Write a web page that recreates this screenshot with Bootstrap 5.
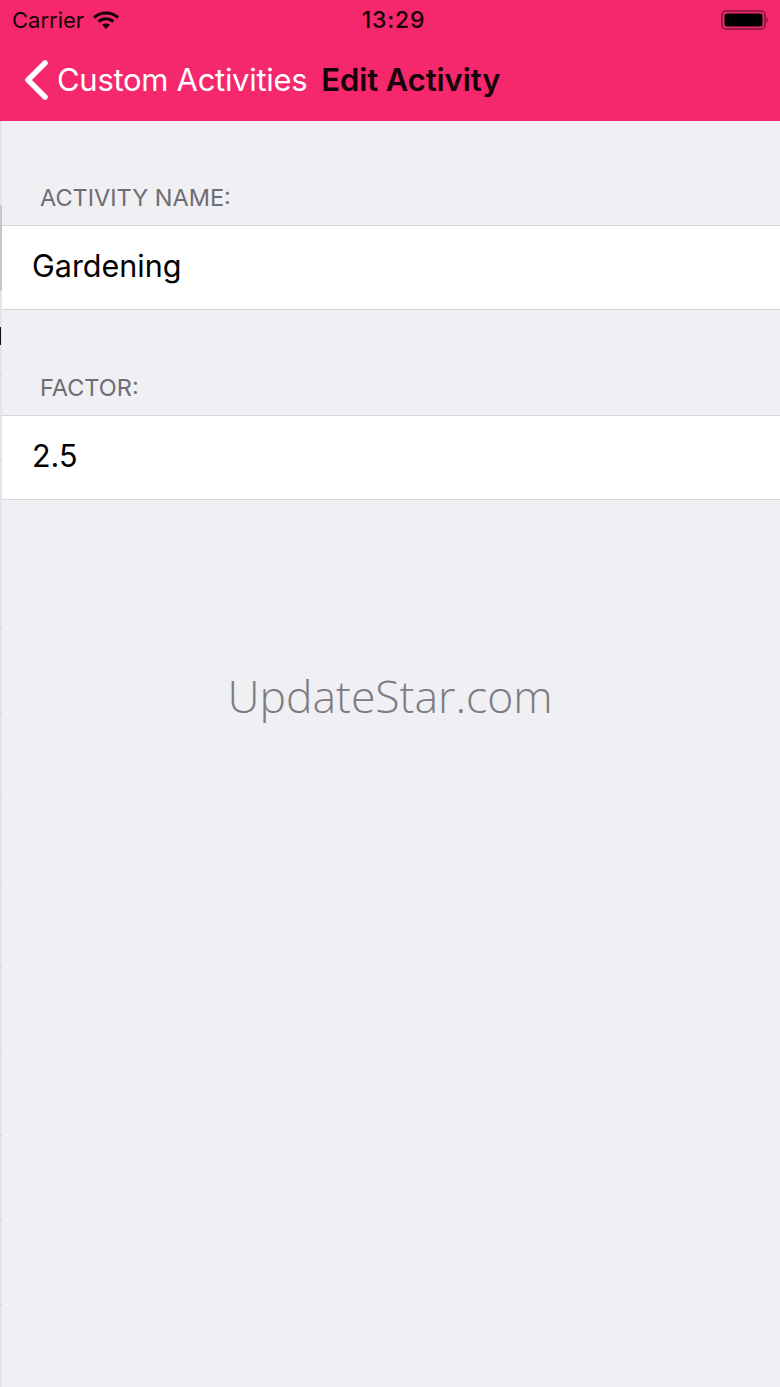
<!DOCTYPE html>
<html>
  <head>
    <meta name="viewport" content="width=device-width, initial-scale=1">
    <link rel="stylesheet" href="https://cdn.jsdelivr.net/npm/bootstrap@5.3.3/dist/css/bootstrap.min.css">
    <style>
      html, body {
        height: 100%;
      }

      body {
        background-color: #efeff4;
        font-family: Inter, "Liberation Sans", sans-serif;
        overflow: hidden;
      }

      .app-header {
        background-color: #f5276d;
        height: 121px;
      }

      .status-row {
        height: 40px;
        padding: 0 12px;
        font-size: 22px;
        color: #16020a;
      }

      .status-side {
        flex: 1 1 0;
      }

      .status-time {
        font-size: 23px;
        font-weight: 500;
        letter-spacing: .8px;
        margin-left: 7px;
      }

      .title-row {
        height: 80px;
        padding-left: 24px;
        font-size: 31px;
      }

      .back-text {
        color: #fff;
        margin-left: 8px;
        letter-spacing: -.3px;
      }

      .title-text {
        color: #16020a;
        font-weight: 600;
        margin-left: 14px;
        letter-spacing: -.1px;
      }

      .page-body {
        height: 1266px;
      }

      .peek-strip {
        width: 2px;
        background-color: #e4e4e9;
        background-image: linear-gradient(to bottom, transparent 83.5px, #cfcfd4 83.5px);
        background-size: 100% 84.5px;
        background-position: 0 1px;
      }

      .peek-block {
        height: 85px;
        margin-top: 84px;
        background-color: #c6c6ca;
      }

      .peek-glyph {
        width: 1px;
        height: 18px;
        margin-top: 37px;
        background-color: #111;
      }

      .section-label {
        height: 45px;
        padding: 0 0 9px 38px;
        margin-top: 59px;
        font-size: 23.5px;
        color: #6d6d72;
      }

      .section-label-next {
        margin-top: 60px;
      }

      .value-row {
        height: 85px;
        padding-left: 31px;
        background-color: #fff;
        border-top: 1px solid #d6d6da;
        border-bottom: 1px solid #d6d6da;
        font-size: 30.5px;
        color: #000;
      }

      .value-text {
        margin-left: -1px;
        margin-top: -3px;
      }

      .watermark {
        margin-top: 166px;
        font-family: "Open Sans", sans-serif;
        font-weight: 300;
        font-size: 44.5px;
        line-height: 60px;
        color: #7c7c81;
        margin-left: -2px;
      }
    </style>
  </head>
  <body>
    <header class="app-header">
      <div class="status-row d-flex align-items-center">
        <div class="status-side d-flex align-items-center gap-2">
          <span>Carrier</span>
          <svg width="28" height="20" viewBox="0 0 28 20" fill="none" stroke="#16020a" stroke-width="3.2">
            <path d="M2 7.5c7-6 17-6 24 0"/>
            <path d="M6.5 11.5c4.500-3.500 10.500-3.500 15 0"/>
            <path d="M14 19l-4-4.500c2.500-1.500 5.500-1.500 8 0z" fill="#16020a" stroke="none"/>
          </svg>
        </div>
        <span class="status-time">13:29</span>
        <div class="status-side d-flex justify-content-end">
          <svg width="47" height="20" viewBox="0 0 47 20">
            <rect x="1" y="1" width="43" height="18" rx="4" fill="none" stroke="#16020a" stroke-opacity=".5" stroke-width="1.500"/>
            <rect x="3.500" y="3.500" width="38" height="13" rx="2.500" fill="#000"/>
            <path d="M45.500 7c1.500.5 1.500 5.500 0 6z" fill="#16020a" fill-opacity=".6"/>
          </svg>
        </div>
      </div>
      <div class="title-row d-flex align-items-center">
        <svg width="25" height="40" viewBox="0 0 25 40" fill="none" stroke="#fff" stroke-width="5.5" stroke-linecap="round" stroke-linejoin="round">
          <path d="M21 3L4 20l17 17"/>
        </svg>
        <span class="back-text">Custom Activities</span>
        <span class="title-text">Edit Activity</span>
      </div>
    </header>

    <div class="page-body d-flex">
      <div class="peek-strip flex-shrink-0">
        <div class="peek-block"></div>
        <div class="peek-glyph"></div>
      </div>
      <main class="flex-grow-1">
        <div class="section-label d-flex align-items-center">ACTIVITY NAME:</div>
        <div class="value-row d-flex align-items-center"><span class="value-text">Gardening</span></div>
        <div class="section-label section-label-next d-flex align-items-center">FACTOR:</div>
        <div class="value-row d-flex align-items-center"><span class="value-text">2.5</span></div>
        <div class="watermark text-center">UpdateStar.com</div>
      </main>
    </div>
  </body>
</html>
